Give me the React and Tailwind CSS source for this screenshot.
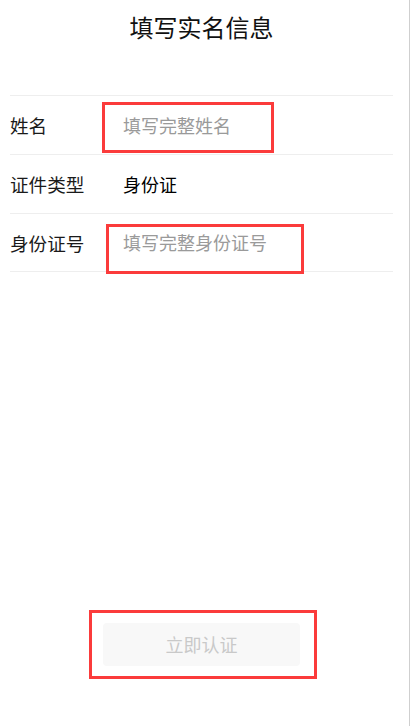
import React from 'react';

const font = { fontFamily: '"Noto Sans CJK SC", "Noto Sans", sans-serif' };

const Row = ({ label, children, last }) => (
    <div className={`relative flex items-center h-[59px] border-t border-[#eeeeee] ${last ? 'border-b' : ''}`}>
        <div className="w-[113px] text-[18.6px] text-[#1a1a1a]">{label}</div>
        {children}
    </div>
);

const App = () => {
    return (
        <div className="h-[726px] w-full bg-white border-r border-[#cfcfcf] flex flex-col" style={font}>
            {/* Header */}
            <div className="h-[95px] flex justify-center pt-[9px] pr-[6px]">
                <h1 className="text-[24px] leading-[36px] text-[#111]">填写实名信息</h1>
            </div>

            {/* Form */}
            <div className="ml-[10px] mr-[16px]">
                <Row label="姓名">
                    <input
                        className="flex-1 text-[18px] outline-none placeholder:text-[#9a9a9a]"
                        placeholder="填写完整姓名"
                    />
                    <div className="absolute left-[92px] top-[6px] w-[172px] h-[51px] border-[3px] border-[#fb3b3b] pointer-events-none"></div>
                </Row>
                <Row label="证件类型">
                    <span className="text-[18px] text-black">身份证</span>
                </Row>
                <Row label="身份证号" last>
                    <input
                        className="flex-1 text-[18px] outline-none placeholder:text-[#9a9a9a]"
                        placeholder="填写完整身份证号"
                    />
                    <div className="absolute left-[96px] top-[10px] w-[198px] h-[50px] border-[3px] border-[#fb3b3b] pointer-events-none"></div>
                </Row>
            </div>

            <div className="flex-1"></div>

            {/* Submit */}
            <div className="relative ml-[103px] w-[197px] mb-[60px]">
                <button
                    disabled
                    className="w-full h-[43px] rounded-[4px] bg-[#f8f8f8] text-[18px] text-[#c9c9c9]"
                >
                    立即认证
                </button>
                <div className="absolute -left-[14px] -top-[13px] w-[228px] h-[69px] border-[3px] border-[#fb3b3b] pointer-events-none"></div>
            </div>
        </div>
    );
};

export default App;
